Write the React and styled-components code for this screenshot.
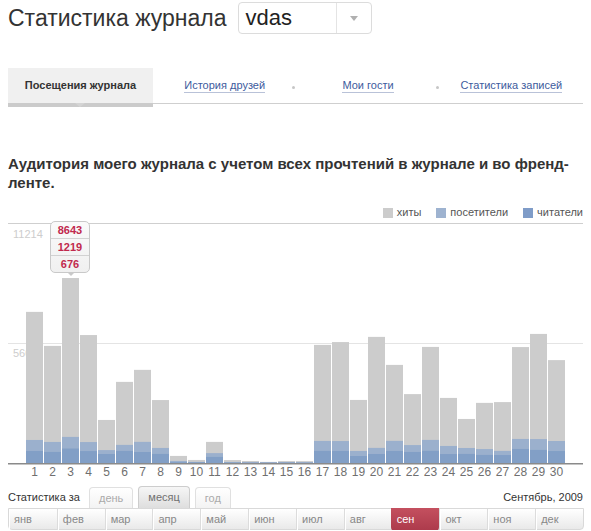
import React from 'react';
import styled, { createGlobalStyle } from 'styled-components';

const GlobalStyle = createGlobalStyle`
  body {
    margin: 0;
    background: #fff;
    font-family: "Liberation Sans", Arial, sans-serif;
    color: #333;
  }
`;

const Page = styled.div`
  width: 575px;
  padding: 2px 8px 0;
`;

const Header = styled.div`
  display: flex;
  align-items: center;
  gap: 11px;
  height: 32px;
`;

const Title = styled.h1`
  margin: 0;
  font-size: 23px;
  font-weight: normal;
  line-height: 32px;
  color: #333;
`;

const Select = styled.div`
  display: flex;
  width: 134px;
  height: 32px;
  box-sizing: border-box;
  border: 1px solid #dcdcdc;
  border-radius: 4px;
`;

const SelectValue = styled.div`
  flex: 1;
  padding-left: 7px;
  font-size: 22px;
  line-height: 29px;
  color: #222;
`;

const SelectArrow = styled.div`
  width: 34px;
  border-left: 1px solid #e4e4e4;
  display: flex;
  align-items: center;
  justify-content: center;
  &::after {
    content: '';
    border-left: 4px solid transparent;
    border-right: 4px solid transparent;
    border-top: 5px solid #b0b0b0;
  }
`;

const Tabs = styled.nav`
  margin-top: 34px;
  display: grid;
  grid-template-columns: 145px 1fr 1fr 1fr;
  align-items: start;
`;

const ActiveTab = styled.div`
  position: relative;
  height: 35px;
  line-height: 35px;
  text-align: center;
  background: #f0f0f0;
  border-bottom: 4px solid #cbcbcb;
  font-size: 11px;
  font-weight: bold;
  color: #333;
  &::after {
    content: '';
    position: absolute;
    left: 67px;
    top: 100%;
    border-left: 5px solid transparent;
    border-right: 5px solid transparent;
    border-top: 4px solid #d4d4d4;
  }
`;

const TabItem = styled.div`
  position: relative;
  height: 35px;
  display: flex;
  align-items: center;
  justify-content: center;
  border-bottom: 1px solid #cfcfcf;
  ${p => p.$dot && `
    &::before {
      content: '';
      position: absolute;
      left: -4px;
      top: 18px;
      width: 3px;
      height: 3px;
      border-radius: 50%;
      background: #c6c6c6;
    }
  `}
`;

const TabLink = styled.a`
  font-size: 11px;
  line-height: 13px;
  color: #3d5b9d;
  text-decoration: none;
  border-bottom: 1px solid #b9c2d8;
  margin-top: 1px;
`;

const Heading = styled.h2`
  margin: 47px -8px 0 0;
  font-size: 15px;
  line-height: 19px;
  font-weight: bold;
  color: #333;
`;

const Legend = styled.div`
  margin-top: 14px;
  display: flex;
  justify-content: flex-end;
  gap: 15px;
  height: 13px;
  margin-bottom: 4px;
`;

const LegendItem = styled.div`
  display: flex;
  align-items: center;
  gap: 4px;
  font-size: 11px;
  line-height: 13px;
  color: #555;
  &::before {
    content: '';
    width: 10px;
    height: 10px;
    background: ${p => p.$color};
  }
`;

const ChartWrap = styled.div`
  position: relative;
  height: 260px;
`;

const ChartSvg = styled.svg`
  display: block;
  font-family: "Liberation Sans", Arial, sans-serif;
`;

const Tooltip = styled.div`
  position: absolute;
  left: 42px;
  top: -2px;
  width: 38px;
  border: 1px solid #c9c9c9;
  border-radius: 5px;
  background: linear-gradient(#fafafa, #f0f0f0);
  &::after {
    content: '';
    position: absolute;
    left: 16px;
    top: 100%;
    border-left: 4px solid transparent;
    border-right: 4px solid transparent;
    border-top: 4px solid #c9c9c9;
  }
`;

const TipRow = styled.div`
  height: 16px;
  line-height: 17px;
  text-align: center;
  font-size: 11px;
  font-weight: bold;
  color: #c1294d;
  & + & {
    border-top: 1px solid #d2d2d2;
  }
`;

const PeriodRow = styled.div`
  display: flex;
  align-items: flex-end;
  height: 22px;
  margin-top: 3px;
`;

const PeriodLabel = styled.span`
  font-size: 11px;
  line-height: 21px;
  color: #333;
  margin-right: 9px;
`;

const PeriodTab = styled.div`
  height: ${p => (p.$active ? 21 : 20)}px;
  line-height: 20px;
  padding: 0 9px;
  margin-right: 5px;
  font-size: 11px;
  color: ${p => (p.$active ? '#707070' : '#aaa')};
  border: 1px solid ${p => (p.$active ? '#cdcdcd' : '#e0e0e0')};
  border-bottom: none;
  border-radius: 4px 4px 0 0;
  background: ${p => (p.$active ? 'linear-gradient(#f6f6f6, #dedede)' : 'linear-gradient(#fff, #f3f3f3)')};
`;

const CurrentDate = styled.span`
  margin-left: auto;
  font-size: 11px;
  line-height: 21px;
  color: #333;
`;

const MonthBar = styled.div`
  display: grid;
  grid-template-columns: repeat(12, 1fr);
  height: 22px;
  width: 576px;
  box-sizing: border-box;
  border: 1px solid #d9d9d9;
  border-radius: 0 0 4px 4px;
  background: linear-gradient(#fff, #e9e9e9);
`;

const Month = styled.div`
  padding-left: 5px;
  font-size: 11px;
  line-height: 21px;
  color: ${p => (p.$active ? '#fff' : '#888')};
  border-left: 1px solid ${p => (p.$active ? 'transparent' : '#dcdcdc')};
  box-shadow: ${p => (p.$active ? 'none' : 'inset 1px 0 0 #fff')};
  &:first-child {
    border-left: none;
  }
  ${p => p.$active && `
    height: 23px;
    margin: -1px 0 -1px -1px;
    padding-top: 1px;
    box-sizing: border-box;
    border-radius: 0 0 4px 4px;
    background: linear-gradient(#c4505f, #ac3a4b);
  `}
`;

const MAX = 11214;
const CH = 240;

const hits = [7061, 5472, 8643, 5978, 2011, 3790, 4352, 2941, 331, 142, 986, 137, 95, 52, 90, 88, 5518, 5650, 2947, 5893, 4584, 3219, 5424, 3041, 2058, 2809, 2846, 5417, 6031, 4808];
const visitors = [1076, 984, 1219, 979, 604, 846, 987, 703, 96, 51, 462, 44, 41, 38, 45, 39, 1031, 1025, 563, 706, 1034, 838, 1079, 797, 702, 651, 566, 1124, 1118, 1027];
const readers = [562, 517, 676, 558, 419, 564, 512, 423, 40, 33, 284, 22, 15, 12, 17, 14, 566, 561, 327, 421, 563, 515, 568, 418, 424, 377, 372, 655, 611, 559];

const months = ['янв', 'фев', 'мар', 'апр', 'май', 'июн', 'июл', 'авг', 'сен', 'окт', 'ноя', 'дек'];

const h = v => (v / MAX) * CH;

const Chart = () => (
  <ChartSvg width="575" height="260">
    <line x1="0" x2="575" y1="0.5" y2="0.5" stroke="#cfcfcf" />
    <line x1="0" x2="575" y1="120.5" y2="120.5" stroke="#e4e4e4" />
    <text x="5" y="15" fontSize="11" fill="#cdcdcd">11214</text>
    <text x="5" y="134" fontSize="11" fill="#cdcdcd">5607</text>
    {hits.map((v, i) => {
      const x = 18 + i * 18;
      return (
        <g key={i}>
          <rect x={x} y={CH - h(v)} width="17" height={h(v)} fill="#cccccc" />
          <rect x={x} y={CH - h(visitors[i])} width="17" height={h(visitors[i])} fill="#9bb0cd" />
          <rect x={x} y={CH - h(readers[i])} width="17" height={h(readers[i])} fill="#829fc6" />
          <text x={x + 8.5} y="253" fontSize="12" fill="#6f6f6f" textAnchor="middle">{i + 1}</text>
        </g>
      );
    })}
    <rect x="0" y={CH} width="575" height="1.5" fill="#8a8a8a" />
  </ChartSvg>
);

export default function App() {
  return (
    <Page>
      <GlobalStyle />
      <Header>
        <Title>Статистика журнала</Title>
        <Select>
          <SelectValue>vdas</SelectValue>
          <SelectArrow />
        </Select>
      </Header>

      <Tabs>
        <ActiveTab>Посещения журнала</ActiveTab>
        <TabItem><TabLink href="#">История друзей</TabLink></TabItem>
        <TabItem $dot><TabLink href="#">Мои гости</TabLink></TabItem>
        <TabItem $dot><TabLink href="#">Статистика записей</TabLink></TabItem>
      </Tabs>

      <Heading>Аудитория моего журнала с учетом всех прочтений в журнале и во френд-ленте.</Heading>

      <Legend>
        <LegendItem $color="#cccccc">хиты</LegendItem>
        <LegendItem $color="#9eb3d0">посетители</LegendItem>
        <LegendItem $color="#7f9cc8">читатели</LegendItem>
      </Legend>

      <ChartWrap>
        <Chart />
        <Tooltip>
          <TipRow>8643</TipRow>
          <TipRow>1219</TipRow>
          <TipRow>676</TipRow>
        </Tooltip>
      </ChartWrap>

      <PeriodRow>
        <PeriodLabel>Статистика за</PeriodLabel>
        <PeriodTab>день</PeriodTab>
        <PeriodTab $active>месяц</PeriodTab>
        <PeriodTab>год</PeriodTab>
        <CurrentDate>Сентябрь, 2009</CurrentDate>
      </PeriodRow>
      <MonthBar>
        {months.map(m => (
          <Month key={m} $active={m === 'сен'}>{m}</Month>
        ))}
      </MonthBar>
    </Page>
  );
}
